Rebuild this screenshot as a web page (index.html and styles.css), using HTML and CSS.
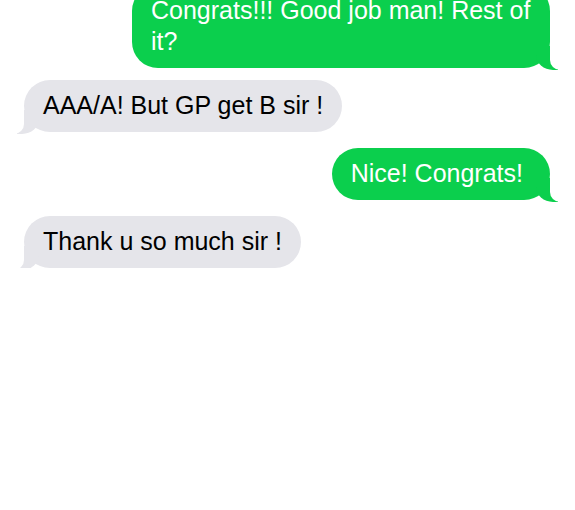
FILE: index.html
```html
<!DOCTYPE html>
<html lang="en">
<head>
<meta charset="utf-8">
<title>Messages</title>
<link rel="stylesheet" href="styles.css">
</head>
<body>
<main class="chat">
  <p class="msg me first">Congrats!!! Good job man! Rest of it?</p>
  <p class="msg them">AAA/A! But GP get B sir !</p>
  <p class="msg me short">Nice! Congrats!</p>
  <p class="msg them">Thank u so much sir !</p>
</main>
</body>
</html>
```
FILE: styles.css
```css
html, body {
  margin: 0;
  padding: 0;
  background: #ffffff;
}

body {
  font-family: "Liberation Sans", Arial, Helvetica, sans-serif;
  overflow: hidden;
}

.chat {
  display: flex;
  flex-direction: column;
  gap: 16px;
  margin-top: -15px;
  padding: 0 25px 0 24px;
}

.msg {
  position: relative;
  margin: 0;
  max-width: 418px;
  box-sizing: border-box;
  padding: 10px 19px 11px;
  border-radius: 26px;
  font-size: 25px;
  line-height: 31px;
}

.first {
  margin-bottom: -4px;
}

.short {
  padding-right: 27px;
}

.me {
  align-self: flex-end;
  background: #0bcf4d;
  color: #ffffff;
}

.them {
  align-self: flex-start;
  background: #e5e5ea;
  color: #000000;
}

.msg::before,
.msg::after {
  content: "";
  position: absolute;
  bottom: -2px;
  height: 24px;
}

.me::before {
  right: -8px;
  width: 22px;
  background: #0bcf4d;
  border-bottom-left-radius: 17px 15px;
}

.me::after {
  right: -26px;
  width: 26px;
  background: #ffffff;
  border-bottom-left-radius: 10px;
}

.them::before {
  left: -7px;
  width: 22px;
  background: #e5e5ea;
  border-bottom-right-radius: 17px 15px;
}

.them::after {
  left: -26px;
  width: 26px;
  background: #ffffff;
  border-bottom-right-radius: 10px;
}
```
